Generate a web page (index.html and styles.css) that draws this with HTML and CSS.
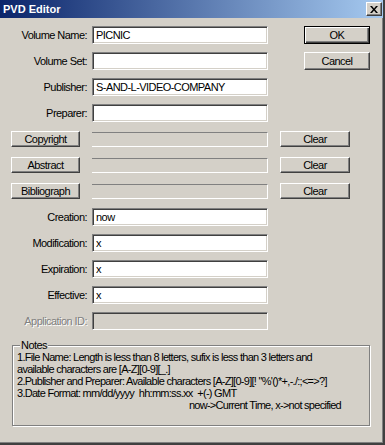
FILE: index.html
```html
<!DOCTYPE html>
<html lang="en">
<head>
    <meta charset="UTF-8">
    <title>PVD Editor</title>
    <link rel="stylesheet" href="styles.css">
</head>
<body>
    <div class="window">
        <div class="titlebar">
            <span class="title">PVD Editor</span>
            <span class="close">
                <svg width="8" height="7" viewBox="0 0 8 7"><path d="M0 0h2l2 2.5L6 0h2L5 3.5 8 7H6L4 4.5 2 7H0l3-3.5z" fill="#000"/></svg>
            </span>
        </div>

        <div class="body">
            <div class="form">
                <div class="row">
                    <label class="lbl">Volume Name:</label>
                    <input class="field" type="text" value="PICNIC">
                    <div class="side"><button class="btn btn-main btn-default">OK</button></div>
                </div>
                <div class="row">
                    <label class="lbl">Volume Set:</label>
                    <input class="field" type="text" value="">
                    <div class="side"><button class="btn btn-main">Cancel</button></div>
                </div>
                <div class="row">
                    <label class="lbl">Publisher:</label>
                    <input class="field" type="text" value="S-AND-L-VIDEO-COMPANY">
                    <div class="side"></div>
                </div>
                <div class="row">
                    <label class="lbl">Preparer:</label>
                    <input class="field" type="text" value="">
                    <div class="side"></div>
                </div>
                <div class="row">
                    <div class="lbl-btn"><button class="btn btn-file">Copyright</button></div>
                    <div class="static"></div>
                    <div class="side"><button class="btn btn-clear">Clear</button></div>
                </div>
                <div class="row">
                    <div class="lbl-btn"><button class="btn btn-file">Abstract</button></div>
                    <div class="static"></div>
                    <div class="side"><button class="btn btn-clear">Clear</button></div>
                </div>
                <div class="row">
                    <div class="lbl-btn"><button class="btn btn-file">Bibliograph</button></div>
                    <div class="static"></div>
                    <div class="side"><button class="btn btn-clear">Clear</button></div>
                </div>
                <div class="row">
                    <label class="lbl">Creation:</label>
                    <input class="field" type="text" value="now">
                    <div class="side"></div>
                </div>
                <div class="row">
                    <label class="lbl">Modification:</label>
                    <input class="field" type="text" value="x">
                    <div class="side"></div>
                </div>
                <div class="row">
                    <label class="lbl">Expiration:</label>
                    <input class="field" type="text" value="x">
                    <div class="side"></div>
                </div>
                <div class="row">
                    <label class="lbl">Effective:</label>
                    <input class="field" type="text" value="x">
                    <div class="side"></div>
                </div>
                <div class="row">
                    <label class="lbl disabled">Application ID:</label>
                    <input class="field" type="text" value="" disabled>
                    <div class="side"></div>
                </div>
            </div>

            <fieldset class="notes">
                <legend>Notes</legend>
                <p>1.File Name: Length is less than 8 letters, sufix is less than 3 letters and<br>
                available characters are [A-Z][0-9][_.]</p>
                <p>2.Publisher and Preparer: Available characters [A-Z][0-9][! "%'()*+,-./:;&lt;=&gt;?]</p>
                <p>3.Date Format: mm/dd/yyyy&nbsp; hh:mm:ss.xx&nbsp; +(-) GMT</p>
                <p class="right">now-&gt;Current Time, x-&gt;not specified</p>
            </fieldset>
        </div>
    </div>
</body>
</html>
```

FILE: styles.css
```css
body {
    margin: 0;
    font-family: "Liberation Sans", Arial, sans-serif;
    font-size: 11px;
    letter-spacing: -0.55px;
    color: #000;
    background: #d4d0c8;
}
.window {
    width: 385px;
    height: 445px;
    box-sizing: border-box;
    background: #d4d0c8;
    border-right: 2px solid #404040;
    border-bottom: 2px solid #404040;
    box-shadow: inset -1px -1px 0 #808080;
}
.titlebar {
    height: 18px;
    display: flex;
    align-items: center;
    justify-content: space-between;
    padding: 0 1px 0 3px;
    background: linear-gradient(to right, #0a246a, #a6caf0);
}
.title {
    color: #fff;
    font-weight: bold;
    font-size: 11px;
    letter-spacing: 0;
}
.close {
    width: 16px;
    height: 14px;
    box-sizing: border-box;
    display: flex;
    align-items: center;
    justify-content: center;
    background: #d4d0c8;
    border: 1px solid;
    border-color: #fff #404040 #404040 #fff;
    box-shadow: inset -1px -1px 0 #808080;
}
.body {
    padding-top: 8px;
}
.form {
    display: flex;
    flex-direction: column;
    gap: 8px;
}
.row {
    display: grid;
    grid-template-columns: 88px 176px 1fr;
    column-gap: 4px;
    height: 18px;
    align-items: center;
}
.lbl {
    text-align: right;
    white-space: nowrap;
    padding-right: 1px;
}
.lbl.disabled {
    color: #808080;
    text-shadow: 1px 1px 0 #fff;
}
.field {
    height: 18px;
    width: 176px;
    box-sizing: border-box;
    margin: 0;
    padding: 0 3px;
    font: inherit;
    letter-spacing: inherit;
    color: #000;
    background: #fff;
    border: 1px solid;
    border-color: #808080 #fff #fff #808080;
    box-shadow: inset 1px 1px 0 #404040, inset -1px -1px 0 #d4d0c8;
    outline: none;
}
.field:disabled {
    background: #d4d0c8;
}
.static {
    height: 15px;
    box-sizing: border-box;
    border-top: 1px solid #808080;
    border-bottom: 1px solid #fff;
    border-right: 1px solid #fff;
}
.btn {
    font: inherit;
    letter-spacing: inherit;
    color: #000;
    background: #d4d0c8;
    margin: 0;
    padding: 0;
    box-sizing: border-box;
    border: 1px solid;
    border-color: #fff #404040 #404040 #fff;
    box-shadow: inset -1px -1px 0 #808080;
}
.btn-main {
    width: 66px;
    height: 18px;
    margin-left: 32px;
}
.btn-default {
    border: 1px solid #000;
    box-shadow: inset 1px 1px 0 #fff, inset -1px -1px 0 #404040, inset -2px -2px 0 #808080;
}
.btn-file {
    width: 69px;
    height: 16px;
    margin-left: 11px;
}
.btn-clear {
    width: 70px;
    height: 16px;
    margin-left: 8px;
}
.notes {
    margin: 9px 0 0 12px;
    width: 358px;
    height: 87px;
    box-sizing: border-box;
    padding: 0 4px;
    border: 1px solid #808080;
    box-shadow: inset 1px 1px 0 #fff, 1px 1px 0 #fff;
}
.notes legend {
    padding: 0 1px;
    margin-left: 3px;
    line-height: 12px;
    background: #d4d0c8;
}
.notes p {
    margin: 0;
    line-height: 12px;
    white-space: nowrap;
    letter-spacing: -0.72px;
}
.notes .right {
    text-align: right;
    padding-right: 24px;
}
```
